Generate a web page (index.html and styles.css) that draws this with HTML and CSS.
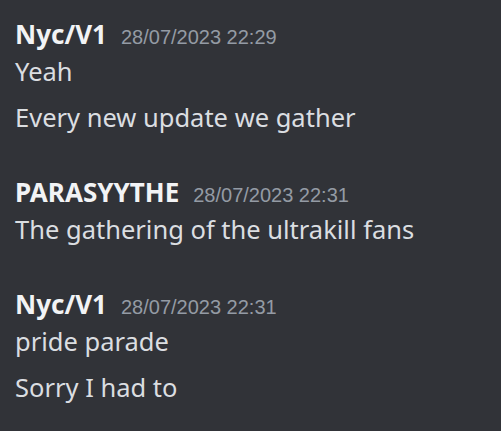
FILE: index.html
```html
<!DOCTYPE html>
<html>
<head>
<meta charset="utf-8">
<link rel="stylesheet" href="styles.css">
</head>
<body>
<div class="chat">
  <div class="group">
    <div class="header"><span class="name">Nyc/V1</span><span class="time">28/07/2023 22:29</span></div>
    <div class="msg">Yeah</div>
    <div class="msg">Every new update we gather</div>
  </div>
  <div class="group">
    <div class="header"><span class="name">PARASYYTHE</span><span class="time">28/07/2023 22:31</span></div>
    <div class="msg">The gathering of the ultrakill fans</div>
  </div>
  <div class="group">
    <div class="header"><span class="name">Nyc/V1</span><span class="time">28/07/2023 22:31</span></div>
    <div class="msg">pride parade</div>
    <div class="msg">Sorry I had to</div>
  </div>
</div>
</body>
</html>
```
FILE: styles.css
```css
html, body {
  margin: 0;
  padding: 0;
  background: #313338;
  height: 100%;
}
.chat {
  display: flex;
  flex-direction: column;
  gap: 41px;
  padding: 23px 15px 0;
  font-family: "Noto Sans", sans-serif;
}
.group {
  display: flex;
  flex-direction: column;
}
.header {
  display: flex;
  align-items: baseline;
  gap: 14px;
  line-height: 22px;
}
.name {
  color: #f2f3f5;
  font-weight: 700;
  font-size: 26px;
}
.time {
  color: #949ba4;
  font-family: "Liberation Sans", Arial, sans-serif;
  font-size: 20px;
}
.msg {
  color: #dbdee1;
  font-size: 25.5px;
  line-height: 46px;
}
```
